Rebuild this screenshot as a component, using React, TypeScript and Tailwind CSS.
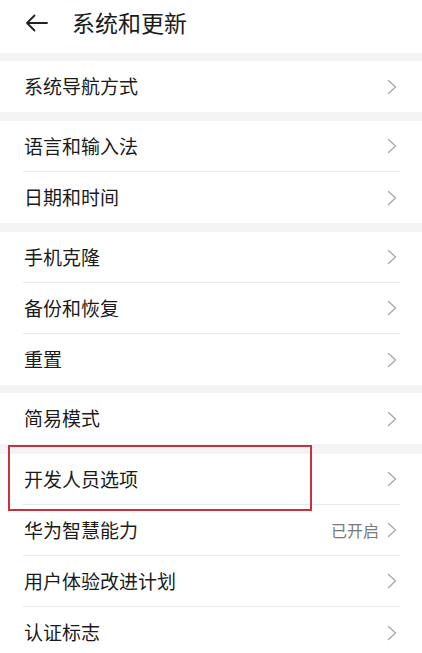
import React from "react";

type Item = { label: string; value?: string };

const groups: Item[][] = [
  [{ label: "系统导航方式" }],
  [{ label: "语言和输入法" }, { label: "日期和时间" }],
  [{ label: "手机克隆" }, { label: "备份和恢复" }, { label: "重置" }],
  [{ label: "简易模式" }],
  [
    { label: "开发人员选项" },
    { label: "华为智慧能力", value: "已开启" },
    { label: "用户体验改进计划" },
    { label: "认证标志" },
  ],
];

const gaps = ["h-[8px]", "h-[9px]", "h-[9px]", "h-[8px]", "h-[10px]"];

function Chevron() {
  return (
    <svg width="10" height="16" viewBox="0 0 10 16" className="shrink-0">
      <path d="M1.5 1.5 L8.5 8 L1.5 14.5" fill="none" stroke="#a8a8a8" strokeWidth="1.3" strokeLinecap="round" strokeLinejoin="round" />
    </svg>
  );
}

function Row({ item, last }: { item: Item; last: boolean }) {
  return (
    <div className="pl-[23px] pr-[22px] bg-white">
      <div
        className={
          "h-[51px] flex items-center justify-between " +
          (last ? "" : "border-b border-[#e9e9e9]")
        }
      >
        <span className="text-[19px] text-[#1b1b1b] pl-px">{item.label}</span>
        <div className="flex items-center gap-[8px] pr-[3px]">
          {item.value && <span className="text-[16px] text-[#7b7b7b]">{item.value}</span>}
          <Chevron />
        </div>
      </div>
    </div>
  );
}

export default function App() {
  return (
    <div
      className="relative w-[422px] h-[653px] overflow-hidden bg-[#f4f4f4]"
      style={{ fontFamily: '"Noto Sans CJK SC", "Noto Sans", sans-serif' }}
    >
      <div className="h-[53px] bg-white flex items-center">
        <svg width="24" height="18" viewBox="0 0 24 18" className="ml-[25px] mt-[-8px]">
          <path d="M22 9 H2 M9.5 1.5 L2 9 L9.5 16.5" fill="none" stroke="#222" strokeWidth="1.8" strokeLinecap="round" strokeLinejoin="round" />
        </svg>
        <span className="ml-[23px] mt-[-9px] text-[23px] text-[#1b1b1b]">系统和更新</span>
      </div>
      {groups.map((g, gi) => (
        <div key={gi}>
          <div className={gaps[gi]} />
          {g.map((item, i) => (
            <Row key={item.label} item={item} last={i === g.length - 1} />
          ))}
        </div>
      ))}
      <div className="absolute left-[8px] top-[445px] w-[304px] h-[66px] border-2 border-[#c9323c]" />
    </div>
  );
}
